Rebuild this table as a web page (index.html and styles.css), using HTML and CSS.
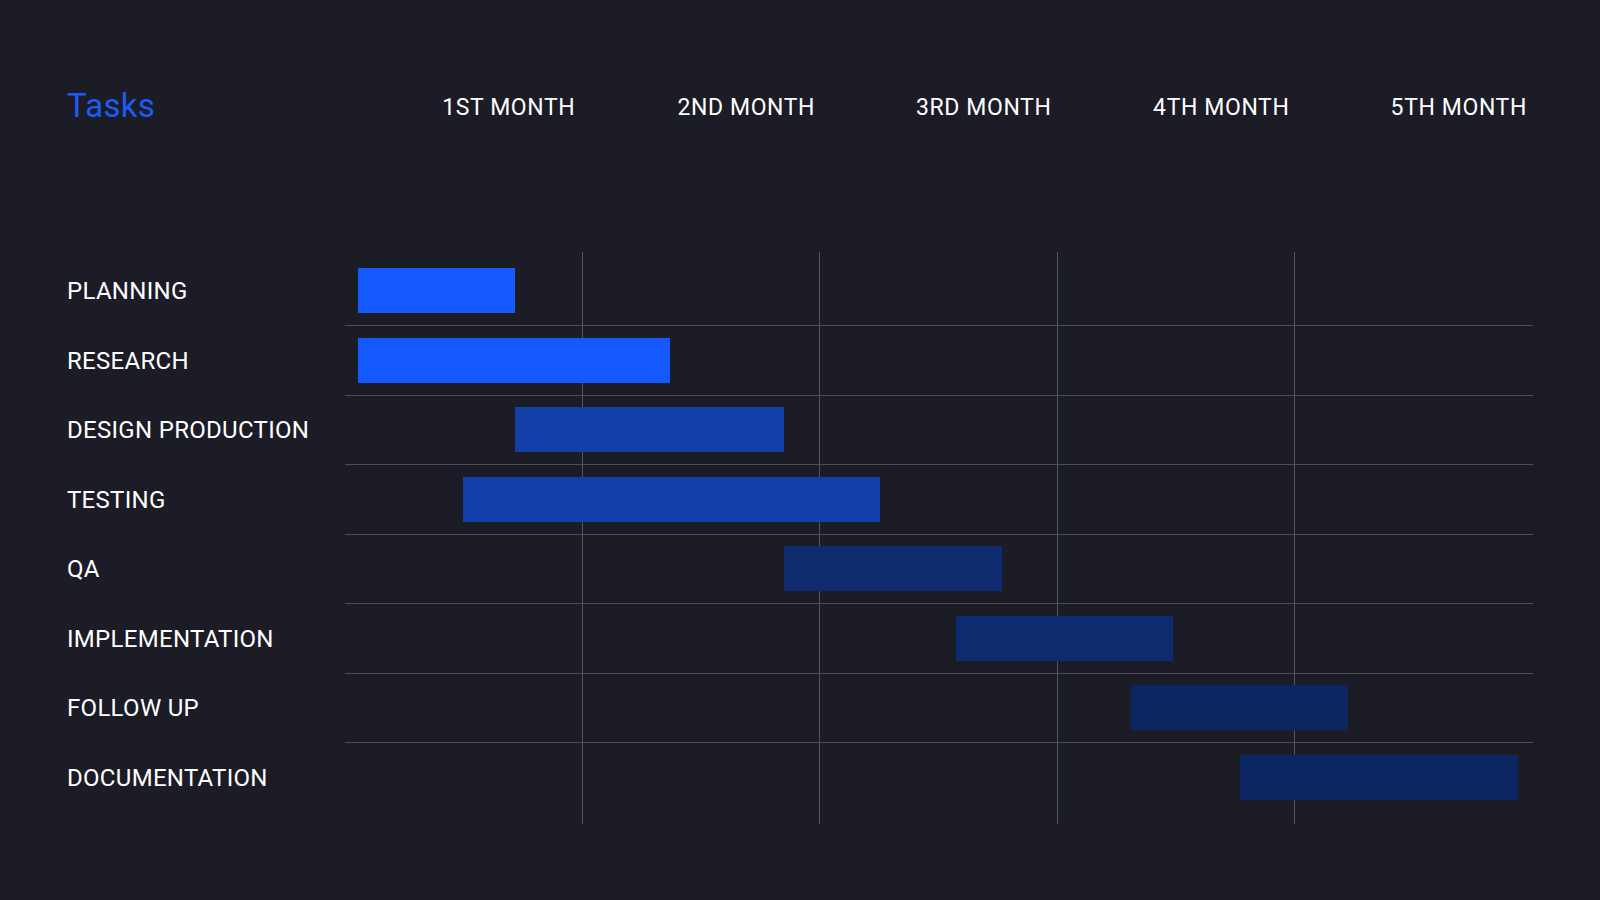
FILE: index.html
```html
<!DOCTYPE html>
<html lang="en">
<head>
<meta charset="utf-8">
<title>Tasks timeline</title>
<link rel="stylesheet" href="styles.css">
</head>
<body>
<main class="page">
  <header class="head">
    <h1 class="title">Tasks</h1>
    <div class="month">1ST MONTH</div>
    <div class="month">2ND MONTH</div>
    <div class="month">3RD MONTH</div>
    <div class="month">4TH MONTH</div>
    <div class="month">5TH MONTH</div>
  </header>

  <section class="chart">
    <ul class="labels">
      <li class="label">PLANNING</li>
      <li class="label">RESEARCH</li>
      <li class="label">DESIGN PRODUCTION</li>
      <li class="label">TESTING</li>
      <li class="label">QA</li>
      <li class="label">IMPLEMENTATION</li>
      <li class="label">FOLLOW UP</li>
      <li class="label">DOCUMENTATION</li>
    </ul>

    <div class="track">
      <div class="cols">
        <div class="col"></div>
        <div class="col"></div>
        <div class="col"></div>
        <div class="col"></div>
        <div class="col"></div>
      </div>
      <div class="rows">
        <div class="row"><div class="bar bar-1" style="margin-left:13.3px;width:157px"></div></div>
        <div class="row"><div class="bar bar-1" style="margin-left:13.3px;width:312.1px"></div></div>
        <div class="row"><div class="bar bar-2" style="margin-left:170px;width:268.7px"></div></div>
        <div class="row"><div class="bar bar-2" style="margin-left:118px;width:416.6px"></div></div>
        <div class="row"><div class="bar bar-3" style="margin-left:439.3px;width:218px"></div></div>
        <div class="row"><div class="bar bar-3" style="margin-left:611.3px;width:217.2px"></div></div>
        <div class="row"><div class="bar bar-4" style="margin-left:785.7px;width:217.8px"></div></div>
        <div class="row"><div class="bar bar-4" style="margin-left:895px;width:278.3px"></div></div>
      </div>
    </div>
  </section>
</main>
</body>
</html>
```

FILE: styles.css
```css
html, body {
  margin: 0;
  padding: 0;
}

body {
  width: 1600px;
  height: 900px;
  overflow: hidden;
  background: #1b1c26;
  color: #ffffff;
  font-family: Roboto, "Liberation Sans", sans-serif;
}

.page {
  padding: 90px 0 0 67px;
}

.head {
  display: grid;
  grid-template-columns: 323px repeat(5, 237.5px);
  align-items: start;
  height: 32px;
}

.title {
  margin: 0;
  font-size: 33px;
  line-height: 32px;
  font-weight: 400;
  letter-spacing: 0.3px;
  color: #1a5cf4;
}

.month {
  padding-top: 2px;
  font-size: 23px;
  line-height: 32px;
  font-weight: 400;
  letter-spacing: 0.6px;
  text-align: center;
  color: #ffffff;
}

.chart {
  display: grid;
  grid-template-columns: 278px 1187.5px;
  margin-top: 130px;
}

.labels {
  list-style: none;
  margin: 0;
  padding: 4.5px 0 0 0;
  display: flex;
  flex-direction: column;
}

.label {
  height: 69.5px;
  display: flex;
  align-items: center;
  font-size: 24px;
  line-height: 28px;
  letter-spacing: 0.3px;
  color: #ffffff;
}

.track {
  display: grid;
  height: 571.5px;
}

.cols,
.rows {
  grid-area: 1 / 1;
}

.cols {
  display: grid;
  grid-template-columns: repeat(5, 1fr);
}

.col {
  border-right: 1px solid #50535d;
}

.col:last-child {
  border-right: none;
}

.rows {
  position: relative;
  padding-top: 4.5px;
  display: flex;
  flex-direction: column;
}

.row {
  box-sizing: border-box;
  height: 69.5px;
  border-bottom: 1px solid #4b4e58;
  display: flex;
  align-items: center;
}

.row:last-child {
  border-bottom: none;
}

.bar {
  height: 45px;
  flex: none;
}

.bar-1 { background: #1458ff; }
.bar-2 { background: #1340a8; }
.bar-3 { background: #0e2b6f; }
.bar-4 { background: #0b2660; }
```
